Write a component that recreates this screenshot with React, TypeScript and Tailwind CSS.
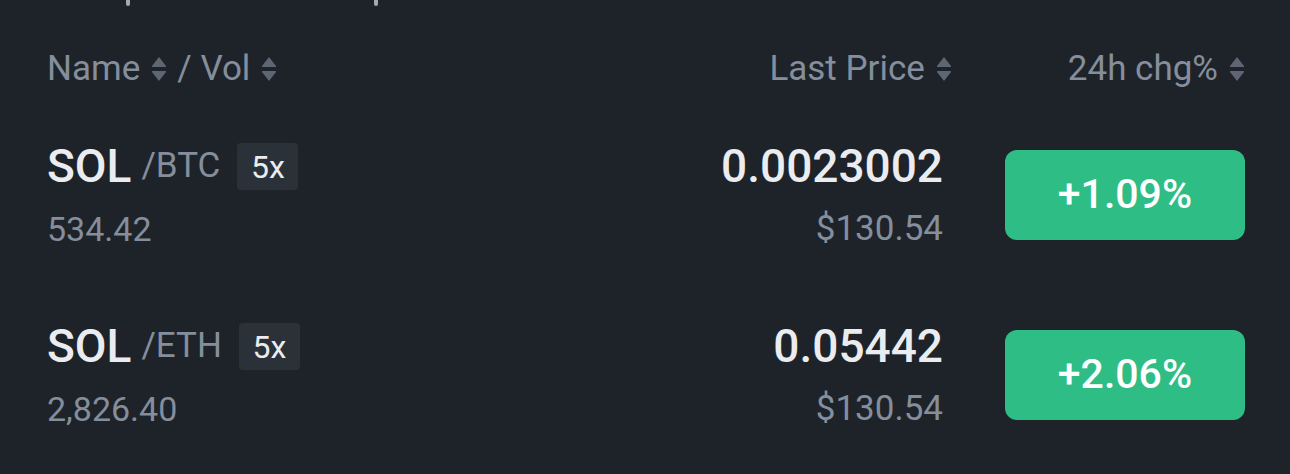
import { ReactNode } from "react";

const rows = [
  { base: "SOL", quote: "/BTC", vol: "534.42", price: "0.0023002", usd: "$130.54", chg: "+1.09%" },
  { base: "SOL", quote: "/ETH", vol: "2,826.40", price: "0.05442", usd: "$130.54", chg: "+2.06%" },
];

function SortIcon() {
  return (
    <svg width="16" height="28" viewBox="0 0 16 28" className="shrink-0">
      <path d="M8 2 L15 11 Q15.5 12 14.2 12 L1.8 12 Q0.5 12 1 11 Z" fill="#5e6673" />
      <path d="M8 26 L15 17 Q15.5 16 14.2 16 L1.8 16 Q0.5 16 1 17 Z" fill="#5e6673" />
    </svg>
  );
}

function HeaderCell({ children }: { children: ReactNode }) {
  return <span className="flex items-center gap-[11px]">{children}</span>;
}

export default function App() {
  return (
    <div
      className="w-[1290px] h-[474px] overflow-hidden bg-[#1e2329]"
      style={{ fontFamily: "Roboto, 'Noto Sans', sans-serif" }}
    >
      <div className="flex h-[8px]">
        <span className="ml-[126px] w-[4px] h-[6px] rounded-b-sm bg-[#a3a9b1]" />
        <span className="ml-[244px] w-[4px] h-[6px] rounded-b-sm bg-[#a3a9b1]" />
      </div>

      <div className="mt-[38px] mb-[13px] flex h-[46px] items-center pl-[47px] pr-[45px] text-[35px] text-[#848e9c]">
        <div className="flex flex-1 items-center gap-[10px]">
          <HeaderCell>
            Name <SortIcon />
          </HeaderCell>
          <HeaderCell>
            / Vol <SortIcon />
          </HeaderCell>
        </div>
        <div className="flex items-center justify-end gap-[116px]">
          <HeaderCell>
            Last Price <SortIcon />
          </HeaderCell>
          <HeaderCell>
            24h chg% <SortIcon />
          </HeaderCell>
        </div>
      </div>

      {rows.map((r) => (
        <div key={r.quote} className="flex h-[180px] items-center pl-[47px] pr-[45px]">
          <div className="flex flex-1 flex-col gap-[17px] pt-[6px]">
            <div className="flex h-[46px] items-center">
              <span className="text-[46px] font-medium text-[#eaecef]">{r.base}</span>
              <span className="ml-[10px] text-[35px] text-[#848e9c]">{r.quote}</span>
              <span className="ml-[17px] flex h-[47px] w-[61px] items-center justify-center rounded-[4px] bg-[#2b3139] text-[32px] text-[#eaecef]">
                5x
              </span>
            </div>
            <div className="flex h-[46px] items-center text-[34px] text-[#848e9c]">{r.vol}</div>
          </div>
          <div className="flex flex-col items-end gap-[17px] pt-[6px]">
            <div className="flex h-[46px] items-center text-[46px] font-medium text-[#eaecef]">{r.price}</div>
            <div className="flex h-[46px] items-center text-[35px] text-[#848e9c]">{r.usd}</div>
          </div>
          <div className="ml-[62px] flex h-[90px] w-[240px] items-center justify-center rounded-[12px] bg-[#2ebd85] text-[41px] font-medium text-white">
            {r.chg}
          </div>
        </div>
      ))}
    </div>
  );
}
